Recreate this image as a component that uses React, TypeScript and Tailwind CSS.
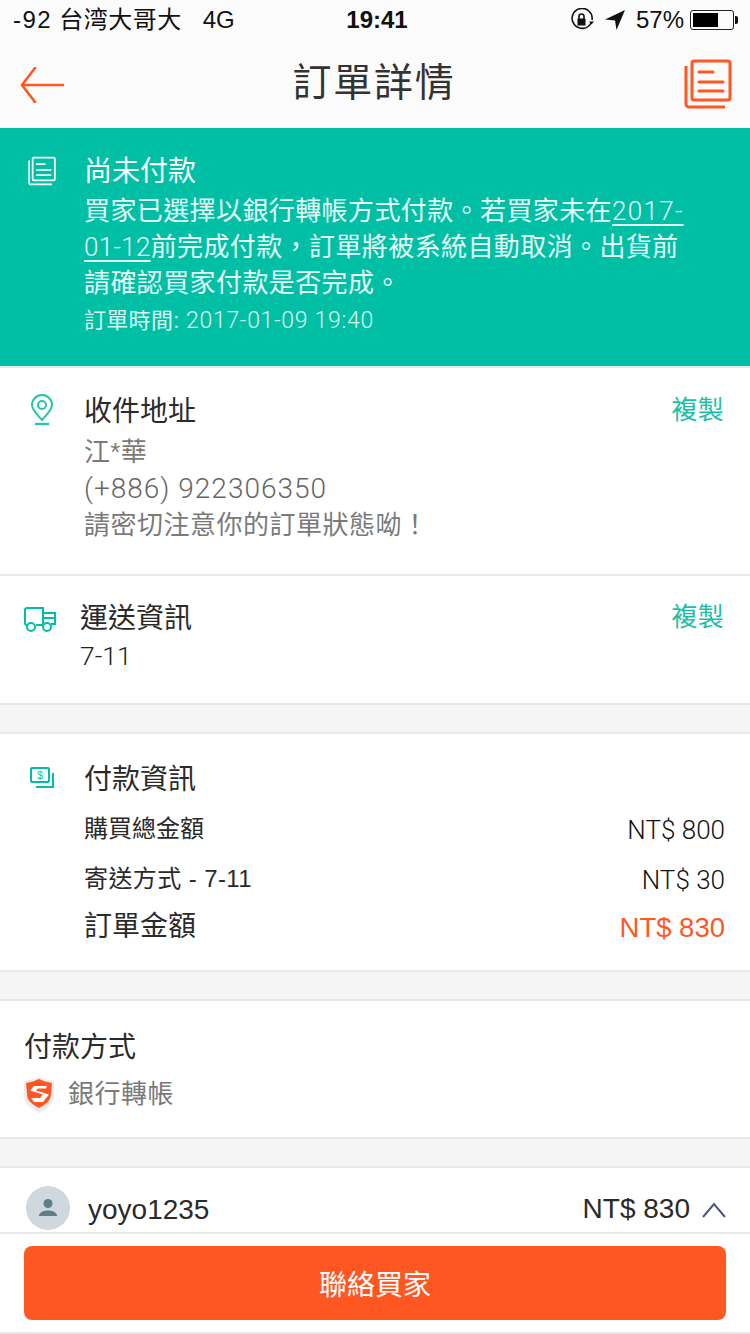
import React from 'react';

const font = "font-['Liberation_Sans','Noto_Sans_CJK_TC',sans-serif]";
// thin latin figures, the way the phone numbers and prices are set
const light = "font-['Roboto','Noto_Sans_CJK_TC',sans-serif] font-light";

const ListIcon = ({ className }: { className: string }) => (
  <svg viewBox="0 0 48 50" className={className} fill="none" stroke="currentColor">
    <rect x="8" y="2" width="38" height="39" rx="2" strokeWidth="3" />
    <path d="M2 7v38a3 3 0 0 0 3 3h36" strokeWidth="3" />
    <path d="M15 13h14M15 23h24M15 32h24" strokeWidth="3" strokeLinecap="round" />
  </svg>
);

const Divider = () => <div className="h-[31px] bg-[#f5f5f5] border-y-2 border-[#e8e8e8]" />;

const CopyLink = () => <span className="text-[26px] leading-[36px] text-[#1cbfa6] tracking-[0.3px]">複製</span>;

export default function App() {
  return (
    <div className={`${font} w-[750px] h-[1334px] flex flex-col overflow-hidden bg-white text-[#2a2a2a]`}>
      {/* status bar */}
      <div className="h-[40px] bg-[#fbfbfb] flex items-center justify-between pl-[13px] pr-[12px] text-[24px] text-[#111]">
        <div className="flex items-center w-[260px]">
          <span className="tracking-[1.5px]">-92</span>
          <span className="ml-[7px] tracking-[0.5px]">台湾大哥大</span>
          <span className="ml-[21px]">4G</span>
        </div>
        <span className="font-bold ml-[3px]">19:41</span>
        <div className="flex items-center justify-end w-[260px]">
          <svg viewBox="0 0 24 24" className="w-[24px] h-[24px] mr-[11px]" fill="none" stroke="#111">
            <path d="M21 15a10 10 0 1 1 1-3" strokeWidth="1.6" />
            <path d="M19 13.5h5l-2.5 3z" fill="#111" stroke="none" />
            <rect x="7.5" y="10.500" width="8" height="7" fill="#111" stroke="none" />
            <path d="M9 11V8.500a2.500 2.500 0 0 1 5 0V11" strokeWidth="1.6" />
          </svg>
          <svg viewBox="0 0 20 20" className="w-[20px] h-[20px] mr-[11px]">
            <path d="M20 0L0 9.500l10 1 1.500 9.500z" fill="#111" />
          </svg>
          <span className="mr-[6px]">57%</span>
          <div className="relative w-[44px] h-[20px] rounded-[3px] border border-[#222] p-[2px] mr-[4px]">
            <div className="w-[25px] h-full bg-black" />
            <div className="absolute -right-[5px] top-[5px] w-[3px] h-[8px] rounded-r-[2px] bg-[#111]" />
          </div>
        </div>
      </div>

      {/* nav bar */}
      <div className="h-[88px] bg-[#fbfbfb] flex items-center justify-between pl-[20px] pr-[18px]">
        <svg viewBox="0 0 44 36" className="w-[44px] h-[36px] mt-[1px]" fill="none" stroke="#ff5722" strokeWidth="2.6" strokeLinecap="round" strokeLinejoin="round">
          <path d="M43 18H2M15 1L2 18l13 17" />
        </svg>
        <h1 className="text-[39px] leading-[48px] text-[#333] tracking-[1.8px] mt-[-2px] font-normal">訂單詳情</h1>
        <ListIcon className="w-[48px] h-[50px] text-[#ff5722] mt-[-1px]" />
      </div>

      <div className="flex-1 overflow-hidden">
        {/* banner */}
        <div className="h-[238px] bg-[#00bfa5] flex text-white pt-[26px] pl-[28px] pr-[50px]">
          <ListIcon className="w-[28px] h-[30px] mt-[2px] shrink-0 text-white" />
          <div className="ml-[28px]">
            <div className="text-[28px] leading-[36px]">尚未付款</div>
            <div className="text-[26px] leading-[36px] mt-[3px] text-white/90 tracking-[0.4px]">
              <div>
                買家已選擇以銀行轉帳方式付款。若買家未在
                <span className={`${light} underline underline-offset-4 tracking-[1.3px]`}>2017-</span>
              </div>
              <div>
                <span className={`${light} underline underline-offset-4 tracking-[0.3px]`}>01-12</span>
                前完成付款，訂單將被系統自動取消。出貨前
              </div>
              <div>請確認買家付款是否完成。</div>
            </div>
            <div className="text-[22px] leading-[30px] mt-[5px] text-white/85 tracking-[0.3px]">
              訂單時間: <span className={`${light} text-[23px] tracking-[0.7px]`}>2017-01-09 19:40</span>
            </div>
          </div>
        </div>

        {/* address */}
        <div className="h-[210px] border-y-2 border-[#e8e8e8] flex pt-[24px] pl-[30px] pr-[26px]">
          <svg viewBox="0 0 24 32" className="w-[24px] h-[32px] mt-[2px] shrink-0" fill="none" stroke="#26c4ab" strokeWidth="2">
            <path d="M12 26C7 20 2 16 2 11a10 10 0 0 1 20 0c0 5-5 9-10 15z" />
            <circle cx="12" cy="11" r="4" />
            <path d="M5 30h14" strokeWidth="2.400" />
          </svg>
          <div className="ml-[30px] flex-1">
            <div className="text-[28px] leading-[40px]">收件地址</div>
            <div className="text-[26px] leading-[37px] text-[#7a7a7a] mt-[2px]">
              <div className="tracking-[0.3px]">江*華</div>
              <div className={`${light} text-[28px] text-[#666] tracking-[1px] -mt-[1px]`}>(+886) 922306350</div>
              <div className="tracking-[0.5px]">請密切注意你的訂單狀態呦！</div>
            </div>
          </div>
          <CopyLink />
        </div>

        {/* shipping */}
        <div className="h-[127px] flex pt-[23px] pl-[24px] pr-[26px]">
          <svg viewBox="0 0 32 25" className="w-[32px] h-[25px] mt-[8px] shrink-0" fill="none" stroke="#00bfa5" strokeWidth="2">
            <path d="M3 18a2 2 0 0 1-2-2V3a2 2 0 0 1 2-2h16v17h-7" />
            <path d="M19 6h12v11h-4M19 11h12" />
            <circle cx="7" cy="20" r="4" />
            <circle cx="23" cy="20" r="4" />
          </svg>
          <div className="ml-[24px] flex-1">
            <div className="text-[28px] leading-[40px]">運送資訊</div>
            <div className={`${light} text-[26.5px] leading-[36px] -mt-[1px] text-[#222]`}>7-11</div>
          </div>
          <CopyLink />
        </div>

        <Divider />

        {/* payment info */}
        <div className="h-[236px] flex pt-[26px] pl-[30px] pr-[25px]">
          <svg viewBox="0 0 24 22" className="w-[24px] h-[22px] mt-[7px] shrink-0" fill="none" stroke="#00bfa5" strokeWidth="2">
            <rect x="1" y="1" width="18" height="14" rx="1" />
            <path d="M23 6v14H6" />
            <text x="10" y="12" fontSize="10" textAnchor="middle" fill="#00bfa5" stroke="none">$</text>
          </svg>
          <div className="ml-[30px] flex-1">
            <div className="text-[28px] leading-[40px]">付款資訊</div>
            <div className="flex justify-between items-center text-[24px] leading-[34px] mt-[10px]">
              <span>購買總金額</span>
              <span className={`${light} text-[26px] text-[#111] mt-[3px]`}>NT$ 800</span>
            </div>
            <div className="flex justify-between items-center text-[24px] leading-[34px] mt-[13px]">
              <span className="tracking-[0.4px]">寄送方式 - 7-11</span>
              <span className={`${light} text-[26px] text-[#111] mt-[3px]`}>NT$ 30</span>
            </div>
            <div className="flex justify-between items-center text-[28px] leading-[40px] mt-[8px]">
              <span>訂單金額</span>
              <span className="text-[#ff5722] text-[27.5px] mt-[3px]">NT$ 830</span>
            </div>
          </div>
        </div>

        <Divider />

        {/* payment method */}
        <div className="h-[136px] pt-[27px] pl-[24px]">
          <div className="text-[28px] leading-[40px]">付款方式</div>
          <div className="flex items-center mt-[7px] -ml-[1px]">
            <svg viewBox="0 0 32 36" className="w-[32px] h-[36px]">
              <path d="M16 0c5 2 10 3 15 4v14c0 8-7 14-15 18C8 32 1 26 1 18V4c5-1 10-2 15-4z" fill="#ececec" />
              <path d="M16 2c4 2 8 3 13 4l-1 11c0 7-6 11-12 14C10 28 4 24 4 17L3 6c5-1 9-2 13-4z" fill="#ff5722" />
              <path d="M24 9H11L7 13.500l13 4L17 21H8l3 4h9l6-7.500-13-4 2-2h8z" fill="#fff" />
            </svg>
            <span className="text-[26px] text-[#7a7a7a] ml-[13px] tracking-[0.5px]">銀行轉帳</span>
          </div>
        </div>

        <Divider />

        {/* buyer row, cut off by the bottom bar */}
        <div className="h-[80px] flex items-center pl-[26px] pr-[24px]">
          <div className="w-[44px] h-[44px] rounded-full bg-[#cfd8dc] flex items-center justify-center">
            <svg viewBox="0 0 20 20" className="w-[20px] h-[20px]" fill="#607d8b">
              <circle cx="10" cy="5.500" r="4.500" />
              <path d="M1 18c0-4 5-5.500 9-5.500s9 1.500 9 5.500z" />
            </svg>
          </div>
          <span className="text-[28px] ml-[18px] flex-1 mt-[4px]">yoyo1235</span>
          <span className="text-[28px] mt-[2px]">NT$ 830</span>
          <svg viewBox="0 0 24 16" className="w-[24px] h-[16px] ml-[12px] mt-[3px]" fill="none" stroke="#4a5878" strokeWidth="2">
            <path d="M1 15L12 2l11 13" />
          </svg>
        </div>
      </div>

      {/* bottom action */}
      <div className="h-[102px] bg-white border-y-2 border-[#e8e8e8] pt-[12px] px-[24px]">
        <button className="w-full h-[74px] rounded-[8px] bg-[#ff5722] text-white text-[28px] pt-[5px]">聯絡買家</button>
      </div>
    </div>
  );
}
